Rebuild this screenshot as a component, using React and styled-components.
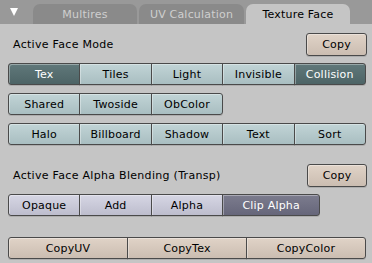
import styled, { createGlobalStyle, css } from "styled-components";

const GlobalStyle = createGlobalStyle`
  body {
    margin: 0;
    background: #c5c5c5;
    font-family: "DejaVu Sans", "Liberation Sans", sans-serif;
  }
`;

const Frame = styled.div`
  width: 372px;
  height: 263px;
  overflow: hidden;
  background: #c5c5c5;
`;

const TabBar = styled.div`
  display: flex;
  align-items: flex-end;
  height: 24px;
  background: #999999;
`;

const Collapse = styled.div`
  width: 33px;
  height: 24px;
  display: flex;
  padding: 8px 0 0 10px;
  box-sizing: border-box;
`;

const Tab = styled.div`
  width: ${(p) => p.$w}px;
  height: 20px;
  margin-right: 2px;
  border-radius: 7px 7px 0 0;
  display: flex;
  align-items: center;
  justify-content: center;
  font-size: 11px;
  letter-spacing: 0.2px;
  padding-top: 1px;
  box-sizing: border-box;
  background: ${(p) => (p.$active ? "#c5c5c5" : "#8a8a8a")};
  color: ${(p) => (p.$active ? "#000" : "#cfcfcf")};
`;

const Panel = styled.div`
  padding: 9px 5px 0 8px;
`;

const HeaderRow = styled.div`
  display: flex;
  justify-content: space-between;
  align-items: center;
  height: 23px;
  padding-left: 5px;
  margin-bottom: ${(p) => p.$gap}px;
  font-size: 11px;
  letter-spacing: 0.3px;
  color: #000;
`;

const ButtonRow = styled.div`
  display: flex;
  margin-bottom: ${(p) => p.$gap}px;
`;

const palettes = {
  teal: ["#c1d4d6", "#a9bec1", "#000"],
  tealOn: ["#60787a", "#4d6466", "#fff"],
  lilac: ["#d6d6e4", "#bdbdcd", "#000"],
  lilacOn: ["#7c7c8e", "#66667a", "#fff"],
  sand: ["#e0d3c7", "#cbbdb1", "#000"],
};

const Btn = styled.div`
  width: ${(p) => p.$w}px;
  height: ${(p) => p.$h || 22}px;
  box-sizing: border-box;
  border: 1px solid #4a4a4a;
  margin-left: -1px;
  display: flex;
  align-items: center;
  justify-content: center;
  font-size: 11px;
  letter-spacing: 0.2px;
  white-space: nowrap;
  ${(p) => {
    const [top, bottom, color] = palettes[p.$tone];
    return css`
      background: linear-gradient(${top}, ${bottom});
      color: ${color};
    `;
  }}
  box-shadow: inset 1px 1px 0 rgba(255, 255, 255, 0.35),
    0 1px 0 rgba(0, 0, 0, 0.12);
  &:first-child {
    margin-left: 0;
    border-radius: 3px 0 0 3px;
  }
  &:last-child {
    border-radius: 0 3px 3px 0;
  }
  &:only-child {
    border-radius: 3px;
  }
`;

const W5 = 72.4;

const modeRows = [
  [["Tex", true], ["Tiles"], ["Light"], ["Invisible"], ["Collision", true]],
  [["Shared"], ["Twoside"], ["ObColor"]],
  [["Halo"], ["Billboard"], ["Shadow"], ["Text"], ["Sort"]],
];

const alpha = [
  ["Opaque", W5],
  ["Add", W5],
  ["Alpha", W5],
  ["Clip Alpha", 98, true],
];

export default function App() {
  return (
    <Frame>
      <GlobalStyle />
      <TabBar>
        <Collapse>
          <svg width="8" height="8" viewBox="0 0 8 8">
            <polygon points="0,0 8,0 4,8" fill="#fff" />
          </svg>
        </Collapse>
        <Tab $w={104}>Multires</Tab>
        <Tab $w={105}>UV Calculation</Tab>
        <Tab $w={104} $active>
          Texture Face
        </Tab>
      </TabBar>
      <Panel>
        <HeaderRow $gap={7}>
          Active Face Mode
          <Btn $w={61} $h={23} $tone="sand">
            Copy
          </Btn>
        </HeaderRow>
        {modeRows.map((row, i) => (
          <ButtonRow key={i} $gap={i === 2 ? 19 : 8}>
            {row.map(([label, on]) => (
              <Btn key={label} $w={W5} $tone={on ? "tealOn" : "teal"}>
                {label}
              </Btn>
            ))}
          </ButtonRow>
        ))}
        <HeaderRow $gap={7}>
          Active Face Alpha Blending (Transp)
          <Btn $w={60} $h={23} $tone="sand">
            Copy
          </Btn>
        </HeaderRow>
        <ButtonRow $gap={21}>
          {alpha.map(([label, w, on]) => (
            <Btn key={label} $w={w} $tone={on ? "lilacOn" : "lilac"}>
              {label}
            </Btn>
          ))}
        </ButtonRow>
        <ButtonRow $gap={0}>
          <Btn $w={120} $tone="sand">CopyUV</Btn>
          <Btn $w={120} $tone="sand">CopyTex</Btn>
          <Btn $w={120} $tone="sand">CopyColor</Btn>
        </ButtonRow>
      </Panel>
    </Frame>
  );
}
